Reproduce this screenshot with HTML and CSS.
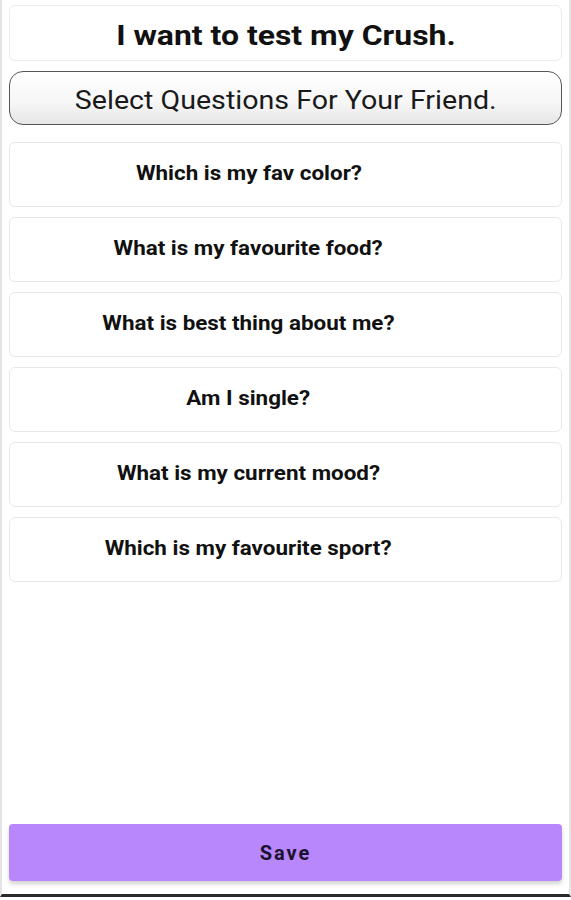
FILE: index.html
```html
<!DOCTYPE html>
<html lang="en">
<head>
    <meta charset="UTF-8">
    <title>Test my Crush</title>
    <link rel="stylesheet" href="styles.css">
</head>
<body>
    <div class="screen">
        <div class="title-card"><span class="wide">I want to test my Crush.</span></div>
        <button class="select-btn"><span class="wide">Select Questions For Your Friend.</span></button>

        <!-- question list -->
        <ul class="questions">
            <li><span class="wide">Which is my fav color?</span></li>
            <li><span class="wide">What is my favourite food?</span></li>
            <li><span class="wide">What is best thing about me?</span></li>
            <li><span class="wide">Am I single?</span></li>
            <li><span class="wide">What is my current mood?</span></li>
            <li><span class="wide">Which is my favourite sport?</span></li>
        </ul>

        <button class="save-btn">Save</button>
    </div>
</body>
</html>
```

FILE: styles.css
```css
body {
    margin: 0;
    background: #fff;
    font-family: Roboto, "Noto Sans", sans-serif;
    color: #111;
}

.screen {
    height: 897px;
    box-sizing: border-box;
    border-left: 2px solid #e4e4e4;
    border-right: 2px solid #e4e4e4;
    border-bottom: 3px solid #2a2a2a;
    padding: 5px 7px 13px 7px;
    display: flex;
    flex-direction: column;
}

/* the app text is drawn a little stretched */
.wide {
    display: inline-block;
    transform: scaleX(1.12);
    white-space: nowrap;
}

.title-card {
    height: 56px;
    border: 1px solid #ececec;
    border-radius: 6px;
    box-sizing: border-box;
    display: flex;
    align-items: center;
    justify-content: center;
    padding-top: 4px;
    font-size: 28px;
    font-weight: 700;
    color: #111;
}

.title-card .wide {
    transform: scaleX(1.14);
}

.select-btn {
    margin-top: 10px;
    height: 54px;
    border: 1.5px solid #555;
    border-radius: 14px;
    background: linear-gradient(#ffffff, #f6f6f6 60%, #e6e6e6);
    font-family: Roboto, sans-serif;
    font-size: 26px;
    color: #1a1a1a;
    padding: 4px 0 0 0;
}

.select-btn .wide {
    transform: scaleX(1.1);
}

.questions {
    list-style: none;
    margin: 17px 0 0 0;
    padding: 0;
    display: flex;
    flex-direction: column;
    gap: 10px;
}

.questions li {
    height: 65px;
    box-sizing: border-box;
    border: 1.5px solid #e8e8e8;
    border-radius: 6px;
    display: flex;
    align-items: center;
    justify-content: center;
    padding: 0 74px 3px 0;
    font-size: 20px;
    font-weight: 700;
    color: #111;
}

.save-btn {
    margin-top: auto;
    height: 57px;
    border: none;
    border-radius: 4px;
    background: #b887fb;
    box-shadow: 0 3px 4px rgba(0, 0, 0, 0.18);
    font-family: Roboto, sans-serif;
    font-size: 20px;
    font-weight: 700;
    letter-spacing: 2px;
    color: #1c1230;
}
```
